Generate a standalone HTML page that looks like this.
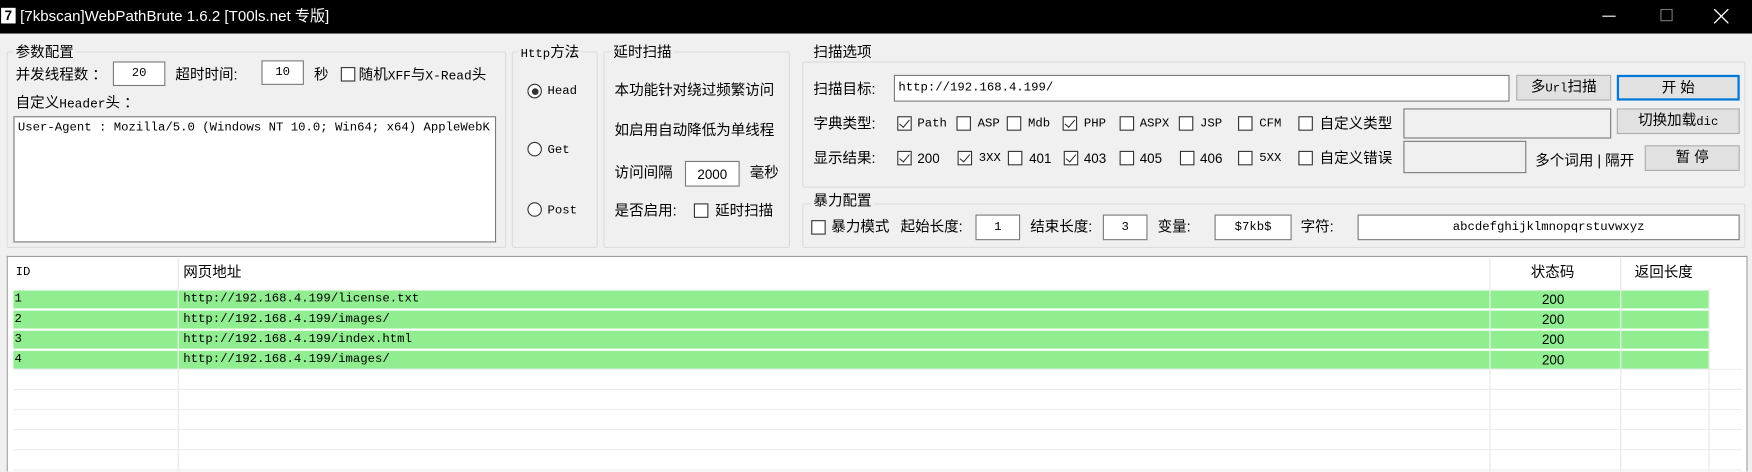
<!DOCTYPE html>
<html><head><meta charset="utf-8"><style>
*{box-sizing:border-box;margin:0;padding:0}
html,body{width:1752px;height:472px;overflow:hidden;background:#f0f0f0}
#w{position:absolute;left:0;top:0;width:1568px;height:422px;transform:scale(1.11735);transform-origin:0 0;font-family:"Liberation Sans","Noto Sans CJK SC",sans-serif;font-size:13px;color:#000}
.a{position:absolute;white-space:nowrap;line-height:16px}
.m{font-family:"Liberation Mono","Noto Sans CJK SC",monospace;font-size:11px}
.g{position:absolute;border:1px solid #dcdcdc;border-radius:2px}
.gl{position:absolute;background:#f0f0f0;padding:0 2px;line-height:14px;white-space:nowrap}
.in{position:absolute;background:#fff;border:1px solid #7a7a7a;text-align:center;white-space:nowrap;overflow:hidden;display:flex;align-items:center;justify-content:center}
.cb{position:absolute;width:13px;height:13px;border:1px solid #333;background:#fff}
.cb.k::after{content:"";position:absolute;left:3px;top:0px;width:4px;height:8px;border:solid #333;border-width:0 1px 1px 0;transform:rotate(40deg)}
.rb{position:absolute;width:13px;height:13px;border:1px solid #333;border-radius:50%;background:#fff}
.rb.k::after{content:"";position:absolute;left:2.5px;top:2.5px;width:6px;height:6px;border-radius:50%;background:#333}
.bt{position:absolute;background:#e1e1e1;border:1px solid #adadad;text-align:center;line-height:20px;white-space:nowrap}
.row{position:absolute;left:12px;width:1517px;height:16px;background:#90ee90}
.hl{position:absolute;left:12px;width:1547px;height:1px;background:#ececec}
.vl{position:absolute;width:1px;background:#e6e6e6;top:231px;height:191px}
.t{position:absolute;line-height:16px;white-space:nowrap}
</style></head><body><div id="w">
<div style="position:absolute;left:0;top:0;width:1568px;height:30px;background:#000"></div>
<div style="position:absolute;left:1px;top:7px;width:13px;height:14px;background:#fff;color:#000;font:bold 12px 'Liberation Sans';text-align:center;line-height:14px">7</div>
<div class="a" style="left:18px;top:7px;color:#fff;font-size:13.5px">[7kbscan]WebPathBrute 1.6.2 [T00ls.net 专版]</div>
<div style="position:absolute;left:1434px;top:14px;width:12px;height:1px;background:#fff"></div>
<div style="position:absolute;left:1486px;top:8px;width:11px;height:11px;border:1px solid #777"></div>
<svg style="position:absolute;left:1534px;top:8px" width="13" height="13"><path d="M0 0L13 13M13 0L0 13" stroke="#fff" stroke-width="1.2"/></svg>

<div class="g" style="left:6px;top:46px;width:447px;height:176px"></div>
<div class="gl" style="left:12px;top:40px">参数配置</div>
<div class="a" style="left:14px;top:59px">并发线程数 ：</div>
<div class="in m" style="left:101px;top:55px;width:47px;height:22px">20</div>
<div class="a" style="left:157px;top:59px">超时时间:</div>
<div class="in m" style="left:234px;top:54px;width:38px;height:22px">10</div>
<div class="a" style="left:281px;top:59px">秒</div>
<div class="cb" style="left:305px;top:60px"></div>
<div class="a" style="left:321px;top:59px">随机<span class="m" style="font-size:11.5px">XFF</span>与<span class="m" style="font-size:11.5px">X-Read</span>头</div>
<div class="a" style="left:14px;top:84px">自定义<span class="m" style="font-size:11.5px">Header</span>头 ：</div>
<div class="m" style="position:absolute;background:#fff;border:1px solid #7a7a7a;left:12px;top:104px;width:432px;height:113px;padding:2px 3px;line-height:16px;white-space:nowrap;overflow:hidden">User-Agent : Mozilla/5.0 (Windows NT 10.0; Win64; x64) AppleWebK</div>

<div class="g" style="left:458px;top:46px;width:77px;height:176px"></div>
<div class="gl" style="left:464px;top:40px"><span class="m">Http</span>方法</div>
<div class="rb k" style="left:472px;top:75px"></div><div class="a m" style="left:490px;top:74px">Head</div>
<div class="rb" style="left:472px;top:127px"></div><div class="a m" style="left:490px;top:127px">Get</div>
<div class="rb" style="left:472px;top:181px"></div><div class="a m" style="left:490px;top:181px">Post</div>

<div class="g" style="left:540px;top:46px;width:167px;height:176px"></div>
<div class="gl" style="left:547px;top:40px">延时扫描</div>
<div class="a" style="left:550px;top:73px">本功能针对绕过频繁访问</div>
<div class="a" style="left:550px;top:109px">如启用自动降低为单线程</div>
<div class="a" style="left:550px;top:147px">访问间隔</div>
<div class="in" style="left:613px;top:144px;width:49px;height:23px;font-size:12px">2000</div>
<div class="a" style="left:671px;top:147px">毫秒</div>
<div class="a" style="left:550px;top:181px">是否启用:</div>
<div class="cb" style="left:621px;top:182px"></div>
<div class="a" style="left:640px;top:181px">延时扫描</div>

<div class="g" style="left:718px;top:55px;width:844px;height:113px"></div>
<div class="gl" style="left:726px;top:40px">扫描选项</div>
<div class="a" style="left:728px;top:72px">扫描目标:</div>
<div class="in m" style="left:800px;top:67px;width:551px;height:24px;justify-content:flex-start;padding-left:3px">http://192.168.4.199/</div>
<div class="bt" style="left:1357px;top:67px;width:85px;height:23px">多<span class="m">Url</span>扫描</div>
<div class="bt" style="left:1447px;top:67px;width:110px;height:23px;border:2px solid #0078d7;line-height:19px">开 始</div>

<div class="a" style="left:728px;top:103px">字典类型:</div>
<div class="cb k" style="left:803px;top:104px"></div><div class="a m" style="left:821px;top:103px">Path</div>
<div class="cb" style="left:856px;top:104px"></div><div class="a m" style="left:875px;top:103px">ASP</div>
<div class="cb" style="left:901px;top:104px"></div><div class="a m" style="left:920px;top:103px">Mdb</div>
<div class="cb k" style="left:951px;top:104px"></div><div class="a m" style="left:970px;top:103px">PHP</div>
<div class="cb" style="left:1002px;top:104px"></div><div class="a m" style="left:1020px;top:103px">ASPX</div>
<div class="cb" style="left:1055px;top:104px"></div><div class="a m" style="left:1074px;top:103px">JSP</div>
<div class="cb" style="left:1108px;top:104px"></div><div class="a m" style="left:1127px;top:103px">CFM</div>
<div class="cb" style="left:1162px;top:104px"></div><div class="a" style="left:1181px;top:103px">自定义类型</div>
<div class="in" style="left:1256px;top:97px;width:186px;height:27px;background:#f0f0f0"></div>
<div class="bt" style="left:1447px;top:97px;width:110px;height:23px">切换加载<span class="m">dic</span></div>

<div class="a" style="left:728px;top:134px">显示结果:</div>
<div class="cb k" style="left:803px;top:135px"></div><div class="a" style="left:821px;top:134px;font-size:12px">200</div>
<div class="cb k" style="left:857px;top:135px"></div><div class="a m" style="left:876px;top:134px">3XX</div>
<div class="cb" style="left:902px;top:135px"></div><div class="a" style="left:921px;top:134px;font-size:12px">401</div>
<div class="cb k" style="left:952px;top:135px"></div><div class="a" style="left:970px;top:134px;font-size:12px">403</div>
<div class="cb" style="left:1002px;top:135px"></div><div class="a" style="left:1020px;top:134px;font-size:12px">405</div>
<div class="cb" style="left:1056px;top:135px"></div><div class="a" style="left:1074px;top:134px;font-size:12px">406</div>
<div class="cb" style="left:1108px;top:135px"></div><div class="a m" style="left:1127px;top:134px">5XX</div>
<div class="cb" style="left:1162px;top:135px"></div><div class="a" style="left:1181px;top:134px">自定义错误</div>
<div class="in" style="left:1256px;top:126px;width:110px;height:29px;background:#f0f0f0"></div>
<div class="a" style="left:1374px;top:136px">多个词用 | 隔开</div>
<div class="bt" style="left:1472px;top:130px;width:85px;height:23px">暂 停</div>

<div class="g" style="left:718px;top:182px;width:844px;height:40px"></div>
<div class="gl" style="left:726px;top:173px">暴力配置</div>
<div class="cb" style="left:726px;top:197px"></div>
<div class="a" style="left:744px;top:195px">暴力模式</div>
<div class="a" style="left:806px;top:195px">起始长度:</div>
<div class="in m" style="left:873px;top:192px;width:40px;height:23px">1</div>
<div class="a" style="left:922px;top:195px">结束长度:</div>
<div class="in m" style="left:987px;top:192px;width:40px;height:23px">3</div>
<div class="a" style="left:1036px;top:195px">变量:</div>
<div class="in m" style="left:1087px;top:192px;width:69px;height:23px">$7kb$</div>
<div class="a" style="left:1164px;top:195px">字符:</div>
<div class="in m" style="left:1215px;top:192px;width:342px;height:23px">abcdefghijklmnopqrstuvwxyz</div>

<div style="position:absolute;left:6px;top:229px;width:1558px;height:193px;background:#fff;border:1px solid #a0a0a0;border-bottom:none"></div>
<div class="vl" style="left:159px;height:27px"></div>
<div class="vl" style="left:1333px"></div>
<div class="vl" style="left:1450px"></div>
<div class="vl" style="left:1529px;top:258px;height:164px"></div>
<div class="vl" style="left:159px;top:258px;height:164px"></div>
<div class="t m" style="left:14px;top:236px">ID</div>
<div class="t" style="left:164px;top:236px">网页地址</div>
<div class="t" style="left:1370px;top:236px">状态码</div>
<div class="t" style="left:1463px;top:236px">返回长度</div>
<div class="row" style="top:260px"></div>
<div class="row" style="top:278px"></div>
<div class="row" style="top:296px"></div>
<div class="row" style="top:314px"></div>
<div class="vl" style="left:159px;top:260px;height:70px;background:#f0f0f0"></div>
<div class="vl" style="left:1333px;top:260px;height:70px;background:#f0f0f0"></div>
<div class="vl" style="left:1450px;top:260px;height:70px;background:#f0f0f0"></div>
<div class="hl" style="top:330px"></div><div class="hl" style="top:348px"></div><div class="hl" style="top:366px"></div><div class="hl" style="top:384px"></div><div class="hl" style="top:402px"></div><div class="hl" style="top:420px"></div>
<div class="t m" style="left:13px;top:260px">1</div><div class="t m" style="left:164px;top:260px">http://192.168.4.199/license.txt</div><div class="t" style="left:1380px;top:260px;font-size:12px">200</div>
<div class="t m" style="left:13px;top:278px">2</div><div class="t m" style="left:164px;top:278px">http://192.168.4.199/images/</div><div class="t" style="left:1380px;top:278px;font-size:12px">200</div>
<div class="t m" style="left:13px;top:296px">3</div><div class="t m" style="left:164px;top:296px">http://192.168.4.199/index.html</div><div class="t" style="left:1380px;top:296px;font-size:12px">200</div>
<div class="t m" style="left:13px;top:314px">4</div><div class="t m" style="left:164px;top:314px">http://192.168.4.199/images/</div><div class="t" style="left:1380px;top:314px;font-size:12px">200</div>
</div></body></html>
